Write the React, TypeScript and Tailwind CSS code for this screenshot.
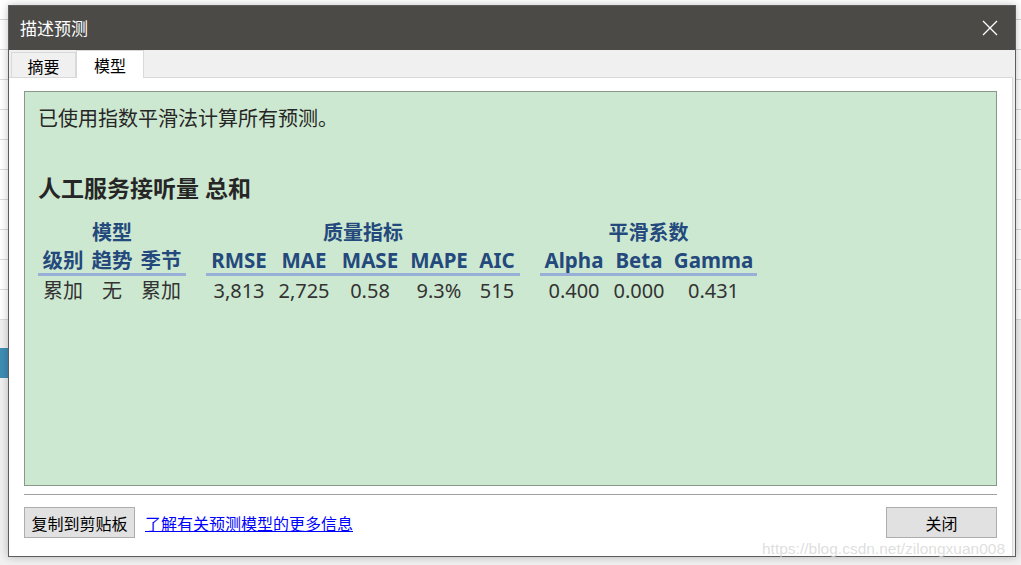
const groups = [
  {
    label: "模型",
    cols: [
      { head: "级别", value: "累加", w: "w-[50px]" },
      { head: "趋势", value: "无", w: "w-[48px]" },
      { head: "季节", value: "累加", w: "w-[50px]" },
    ],
  },
  {
    label: "质量指标",
    cols: [
      { head: "RMSE", value: "3,813", w: "w-[66px]" },
      { head: "MAE", value: "2,725", w: "w-[64px]" },
      { head: "MASE", value: "0.58", w: "w-[68px]" },
      { head: "MAPE", value: "9.3%", w: "w-[70px]" },
      { head: "AIC", value: "515", w: "w-[46px]" },
    ],
  },
  {
    label: "平滑系数",
    cols: [
      { head: "Alpha", value: "0.400", w: "w-[68px]" },
      { head: "Beta", value: "0.000", w: "w-[62px]" },
      { head: "Gamma", value: "0.431", w: "w-[87px]" },
    ],
  },
];

function CloseIcon() {
  return (
    <svg width="16" height="16" viewBox="0 0 16 16" fill="none">
      <path d="M1 1L15 15M15 1L1 15" stroke="#ffffff" strokeWidth="1.3" />
    </svg>
  );
}

export default function App() {
  return (
    <div className="relative h-[565px] w-[1021px] overflow-hidden bg-[#f4f4f4] font-['Noto_Sans','Noto_Sans_CJK_SC',sans-serif]">
      {/* spreadsheet behind the dialog */}
      <div className="flex h-full flex-col">
        <div className="h-[20px] border-b border-[#d4d4d4] bg-white" />
        <div className="h-[30px] border-b border-[#dcdcdc] bg-white" />
        <div className="h-[30px] border-b border-[#dcdcdc] bg-white" />
        <div className="h-[30px] border-b border-[#dcdcdc] bg-white" />
        <div className="h-[30px] border-b border-[#dcdcdc] bg-white" />
        <div className="h-[30px] border-b border-[#dcdcdc] bg-white" />
        <div className="h-[30px] border-b border-[#dcdcdc] bg-white" />
        <div className="h-[30px] border-b border-[#dcdcdc] bg-white" />
        <div className="h-[30px] border-b border-[#dcdcdc] bg-white" />
        <div className="h-[30px] border-b border-[#dcdcdc] bg-white" />
        <div className="h-[30px] border-b border-[#dcdcdc] bg-white" />
        <div className="flex-1 bg-[#f0f0f0]" />
      </div>
      <div className="absolute left-0 top-[348px] h-[30px] w-[8px] bg-[#3f8db5]" />

      {/* dialog */}
      <div className="absolute left-[8px] top-[5px] flex h-[552px] w-[1008px] flex-col border border-[#5c5c5c] bg-[#f0f0f0] shadow-[0_0_8px_rgba(0,0,0,0.25)]">
        <div className="flex h-[44px] shrink-0 items-center justify-between bg-[#4b4a47] pl-[11px] pr-[17px]">
          <span className="font-['Noto_Sans_CJK_SC',sans-serif] text-[17px] text-white">描述预测</span>
          <CloseIcon />
        </div>

        <div className="flex h-[27px] shrink-0 items-end pl-[2px] font-['Noto_Sans_CJK_SC',sans-serif] text-[16px] text-black">
          <div className="flex h-[25px] w-[65px] items-center justify-center border border-b-0 border-[#d9d9d9] bg-[#f0f0f0] pt-[2px]">
            摘要
          </div>
          <div className="-mb-px relative flex h-[28px] w-[68px] items-center justify-center border border-b-0 border-[#d9d9d9] bg-white">
            模型
          </div>
        </div>

        <div className="mr-[2px] flex flex-1 flex-col border-t border-r border-[#d9d9d9] bg-white px-[15px] pb-[17px] pt-[13px]">
          <div className="h-[395px] border border-[#8a978b] bg-[#cde8d0] pl-[13px] pt-[13px] text-[#262626]">
            <p className="text-[20px] leading-[28px]">已使用指数平滑法计算所有预测。</p>
            <h2 className="mt-[40px] text-[23px] font-bold leading-[30px]">人工服务接听量 总和</h2>

            <div className="mt-[16px] flex gap-[20px]">
              {groups.map((g) => (
                <div key={g.label} className="flex flex-col">
                  <div className="h-[28px] text-center text-[20px] font-bold leading-[28px] text-[#24497c]">
                    {g.label}
                  </div>
                  <div className="flex border-b-[3px] border-[#98b0d8]">
                    {g.cols.map((c) => (
                      <div
                        key={c.head}
                        className={`${c.w} h-[26px] text-center text-[20.5px] font-bold leading-[26px] text-[#24497c]`}
                      >
                        {c.head}
                      </div>
                    ))}
                  </div>
                  <div className="mt-[2px] flex">
                    {g.cols.map((c) => (
                      <div key={c.head} className={`${c.w} text-center text-[20px] leading-[26px] text-[#333333]`}>
                        {c.value}
                      </div>
                    ))}
                  </div>
                </div>
              ))}
            </div>
          </div>

          <div className="mt-[8px] h-px bg-[#a0a0a0]" />

          <div className="mt-[12px] flex items-center font-['Noto_Sans_CJK_SC',sans-serif] text-[16px]">
            <button className="h-[31px] w-[111px] border border-[#adadad] bg-[#e1e1e1] text-black">复制到剪贴板</button>
            <a href="#" className="ml-[10px] text-[#0000ff] underline">
              了解有关预测模型的更多信息
            </a>
            <button className="ml-auto h-[31px] w-[111px] border border-[#adadad] bg-[#e1e1e1] text-black">关闭</button>
          </div>
        </div>
      </div>

      <div className="absolute left-[762px] top-[537px] whitespace-nowrap font-['Liberation_Sans',sans-serif] text-[15.5px] text-[#d6d6d6]/80">
        https://blog.csdn.net/zilongxuan008
      </div>
    </div>
  );
}
